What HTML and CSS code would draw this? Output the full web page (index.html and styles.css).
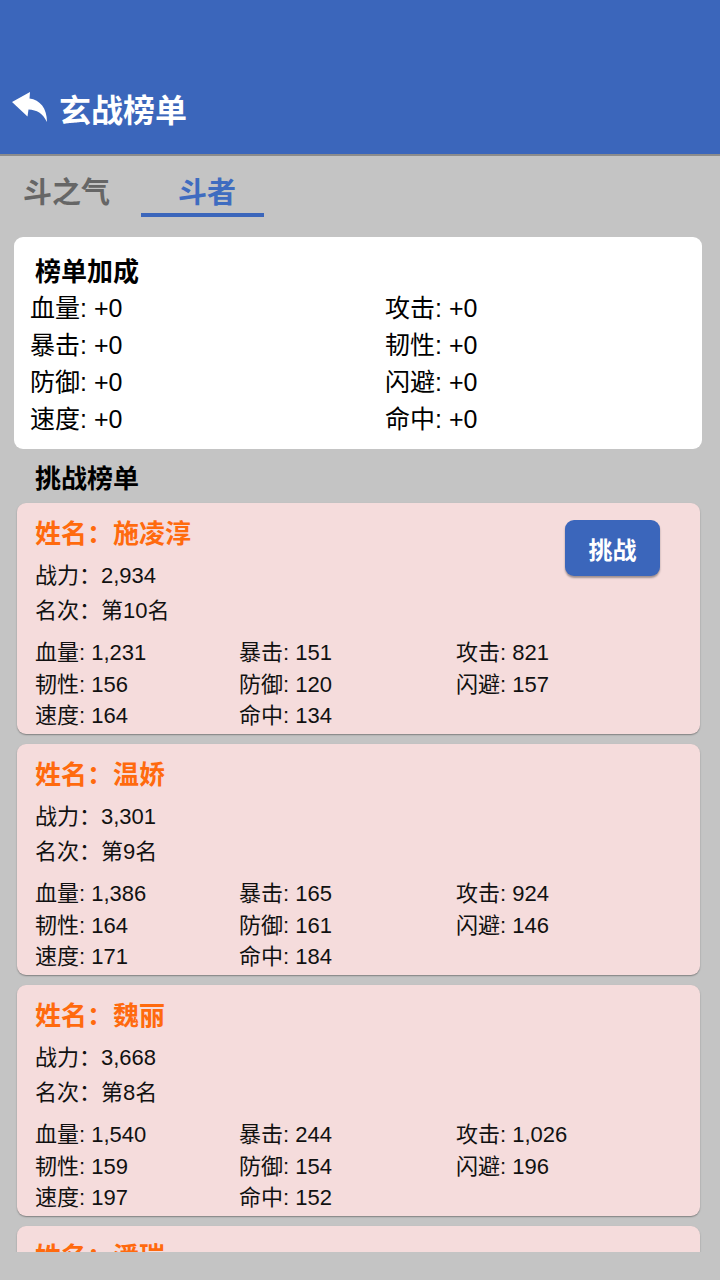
FILE: index.html
```html
<!DOCTYPE html>
<html lang="zh-CN">
<head>
<meta charset="utf-8">
<title>玄战榜单</title>
<link rel="stylesheet" href="styles.css">
</head>
<body>
<div class="page">
  <header class="topbar">
    <svg class="back" viewBox="0 0 36 32" width="36" height="32" aria-hidden="true">
      <path d="M0 11 L18 1 L17.5 7.5 C28 9 35 17 35 31 C30.5 22 25 19 16.5 18.5 L15.5 25.5 Z" fill="#fff"/>
    </svg>
    <h1 class="title">玄战榜单</h1>
  </header>

  <nav class="tabs">
    <div class="tab">斗之气</div>
    <div class="tab active">斗者</div>
  </nav>

  <section class="bonus">
    <div class="bonus-title">榜单加成</div>
    <div class="bonus-grid">
      <div>血量: +0</div><div>攻击: +0</div>
      <div>暴击: +0</div><div>韧性: +0</div>
      <div>防御: +0</div><div>闪避: +0</div>
      <div>速度: +0</div><div>命中: +0</div>
    </div>
  </section>

  <div class="section-title">挑战榜单</div>

  <div class="list">
    <article class="card">
      <div class="card-top">
        <div class="card-info">
          <div class="name">姓名<span class="colon">：</span>施凌淳</div>
          <div class="info">战力：2,934</div>
          <div class="info">名次：第10名</div>
        </div>
        <button class="btn">挑战</button>
      </div>
      <div class="stats">
        <div>血量: 1,231</div><div>暴击: 151</div><div>攻击: 821</div>
        <div>韧性: 156</div><div>防御: 120</div><div>闪避: 157</div>
        <div>速度: 164</div><div>命中: 134</div><div></div>
      </div>
    </article>

    <article class="card">
      <div class="card-top">
        <div class="card-info">
          <div class="name">姓名<span class="colon">：</span>温娇</div>
          <div class="info">战力：3,301</div>
          <div class="info">名次：第9名</div>
        </div>
      </div>
      <div class="stats">
        <div>血量: 1,386</div><div>暴击: 165</div><div>攻击: 924</div>
        <div>韧性: 164</div><div>防御: 161</div><div>闪避: 146</div>
        <div>速度: 171</div><div>命中: 184</div><div></div>
      </div>
    </article>

    <article class="card">
      <div class="card-top">
        <div class="card-info">
          <div class="name">姓名<span class="colon">：</span>魏丽</div>
          <div class="info">战力：3,668</div>
          <div class="info">名次：第8名</div>
        </div>
      </div>
      <div class="stats">
        <div>血量: 1,540</div><div>暴击: 244</div><div>攻击: 1,026</div>
        <div>韧性: 159</div><div>防御: 154</div><div>闪避: 196</div>
        <div>速度: 197</div><div>命中: 152</div><div></div>
      </div>
    </article>

    <article class="card">
      <div class="card-top">
        <div class="card-info">
          <div class="name">姓名<span class="colon">：</span>潘瑞</div>
          <div class="info">战力：3,912</div>
          <div class="info">名次：第7名</div>
        </div>
      </div>
    </article>
  </div>
</div>
</body>
</html>
```
FILE: styles.css
```css
* { box-sizing: border-box; }
html, body {
  margin: 0;
  padding: 0;
  background: #c4c4c4;
}
body {
  font-family: "Liberation Sans", "Noto Sans CJK SC", sans-serif;
  color: #111;
}
.page {
  width: 720px;
  height: 1252px;
  overflow: hidden;
  display: flex;
  flex-direction: column;
}
.topbar {
  flex: none;
  height: 156px;
  background: #3b66bb;
  border-bottom: 2px solid #8c8c8c;
  display: flex;
  align-items: center;
  padding: 62px 0 0 12px;
}
.back { flex: none; margin-top: -2px; }
.title {
  margin: 0 0 0 11px;
  color: #fff;
  font-family: "Noto Sans CJK SC", sans-serif;
  font-size: 32px;
  font-weight: 700;
  line-height: 40px;
}
.tabs {
  flex: none;
  display: flex;
  height: 61px;
  padding-left: 5px;
  gap: 13px;
}
.tab {
  width: 123px;
  height: 61px;
  padding-top: 14px;
  text-align: center;
  font-family: "Noto Sans CJK SC", sans-serif;
  font-size: 29px;
  font-weight: 700;
  line-height: 40px;
  color: #666;
}
.tab.active {
  color: #3f6cc0;
  border-bottom: 4px solid #3b66bb;
  padding-left: 9px;
}
.bonus {
  flex: none;
  margin: 20px 18px 0 14px;
  height: 212px;
  background: #fff;
  border-radius: 9px;
  padding: 17px 16px 0 16px;
}
.bonus-title {
  font-family: "Noto Sans CJK SC", sans-serif;
  font-size: 26px;
  font-weight: 700;
  line-height: 32px;
  padding-left: 5px;
  color: #000;
}
.bonus-grid {
  margin-top: 4px;
  display: grid;
  grid-template-columns: 355px 1fr;
  font-size: 25px;
  line-height: 37px;
  color: #000;
}
.section-title {
  flex: none;
  margin: 10px 0 0 35px;
  font-family: "Noto Sans CJK SC", sans-serif;
  font-size: 26px;
  font-weight: 700;
  line-height: 36px;
  color: #000;
}
.list {
  flex: none;
  margin-top: 8px;
  display: flex;
  flex-direction: column;
  gap: 10px;
}
.card {
  margin: 0 20px 0 17px;
  height: 231px;
  background: #f5dcdc;
  border-radius: 9px;
  box-shadow: 0 1px 1.5px rgba(0,0,0,0.35);
  padding: 13px 17px 0 18px;
}
.card-top {
  display: flex;
  justify-content: space-between;
  align-items: flex-start;
}
.name {
  font-family: "Noto Sans CJK SC", sans-serif;
  font-size: 26px;
  font-weight: 700;
  line-height: 32px;
  color: #ff6a0e;
}
.colon {
  font-family: "Noto Sans CJK TC", sans-serif;
}
.info {
  font-size: 22px;
  line-height: 35px;
  color: #111;
}
.name + .info { margin-top: 10px; }
.btn {
  margin: 4px 23px 0 0;
  width: 95px;
  height: 56px;
  border: none;
  border-radius: 9px;
  background: #3b66bb;
  color: #fff;
  font-family: "Noto Sans CJK SC", sans-serif;
  font-size: 24px;
  font-weight: 700;
  box-shadow: 0 2px 2px rgba(0,0,0,0.35);
}
.stats {
  margin-top: 9px;
  display: grid;
  grid-template-columns: 204px 217px 1fr;
  font-size: 22px;
  line-height: 31.5px;
  color: #111;
}
```
